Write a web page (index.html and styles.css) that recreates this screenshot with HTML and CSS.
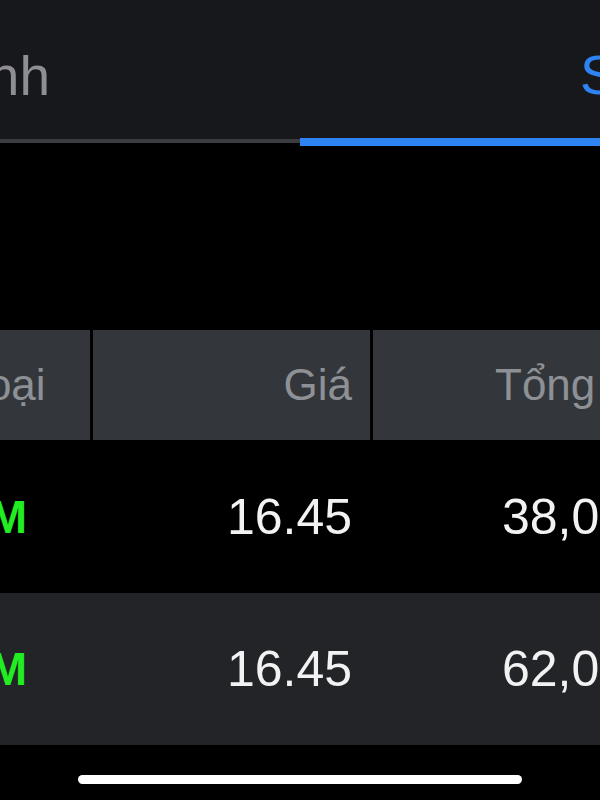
FILE: index.html
```html
<!DOCTYPE html>
<html lang="vi">

<head>
    <meta charset="UTF-8">
    <meta name="viewport" content="width=device-width, initial-scale=1.0">
    <title>Sổ lệnh</title>
    <link rel="stylesheet" href="styles.css">
</head>

<body>
    <div class="tabs">
        <div class="tab tab-left">Lệnh</div>
        <div class="tab tab-right active">Sổ lệnh</div>
    </div>

    <div class="table">
        <div class="row head">
            <div class="cell type">Loại</div>
            <div class="cell price">Giá</div>
            <div class="cell total">Tổng</div>
        </div>
        <div class="row">
            <div class="cell type buy">M</div>
            <div class="cell price">16.45</div>
            <div class="cell total">38,000</div>
        </div>
        <div class="row alt">
            <div class="cell type buy">M</div>
            <div class="cell price">16.45</div>
            <div class="cell total">62,000</div>
        </div>
    </div>

    <div class="home-bar"></div>
</body>

</html>
```

FILE: styles.css
```css
body {
    margin: 0;
    height: 800px;
    overflow: hidden;
    background-color: #000;
    font-family: "Liberation Sans", Arial, sans-serif;
}

/* tabs */
.tabs {
    display: flex;
    align-items: flex-start;
}

.tab {
    display: flex;
    align-items: center;
    padding-top: 12px;
    white-space: nowrap;
    background-color: #17181b;
    font-size: 55px;
}

.tab-left {
    width: 50px;
    height: 127px;
    justify-content: flex-end;
    padding-right: 250px;
    color: #8e8e93;
    border-bottom: 4px solid #3a3c40;
}

.tab-right {
    width: 20px;
    height: 126px;
    padding-left: 280px;
    color: #2f84f4;
    border-bottom: 8px solid #2f84f4;
}

/* order table */
.table {
    margin-top: 184px;
    margin-left: -82px;
}

.row {
    display: grid;
    grid-template-columns: 172px 277px 1fr;
    column-gap: 3px;
    height: 153px;
    align-items: center;
    font-size: 50px;
    color: #f2f2f2;
    white-space: nowrap;
}

.row.alt {
    height: 152px;
    background-color: #232428;
}

.row.head {
    height: 110px;
    align-items: stretch;
    font-size: 44px;
    color: #8d9196;
}

.row.head .cell {
    display: flex;
    align-items: center;
    background-color: #33373b;
}

.row.head .type {
    justify-content: center;
}

.type {
    text-align: center;
}

.buy {
    padding-left: 8px;
    color: #22ec22;
    font-weight: bold;
    font-size: 46px;
}

.price {
    justify-content: flex-end;
    text-align: right;
    padding-right: 18px;
}

.total {
    padding-left: 129px;
}

.row.head .total {
    padding-left: 122px;
}

.home-bar {
    width: 444px;
    height: 9px;
    margin: 30px auto 0;
    border-radius: 5px;
    background-color: #fff;
}
```
